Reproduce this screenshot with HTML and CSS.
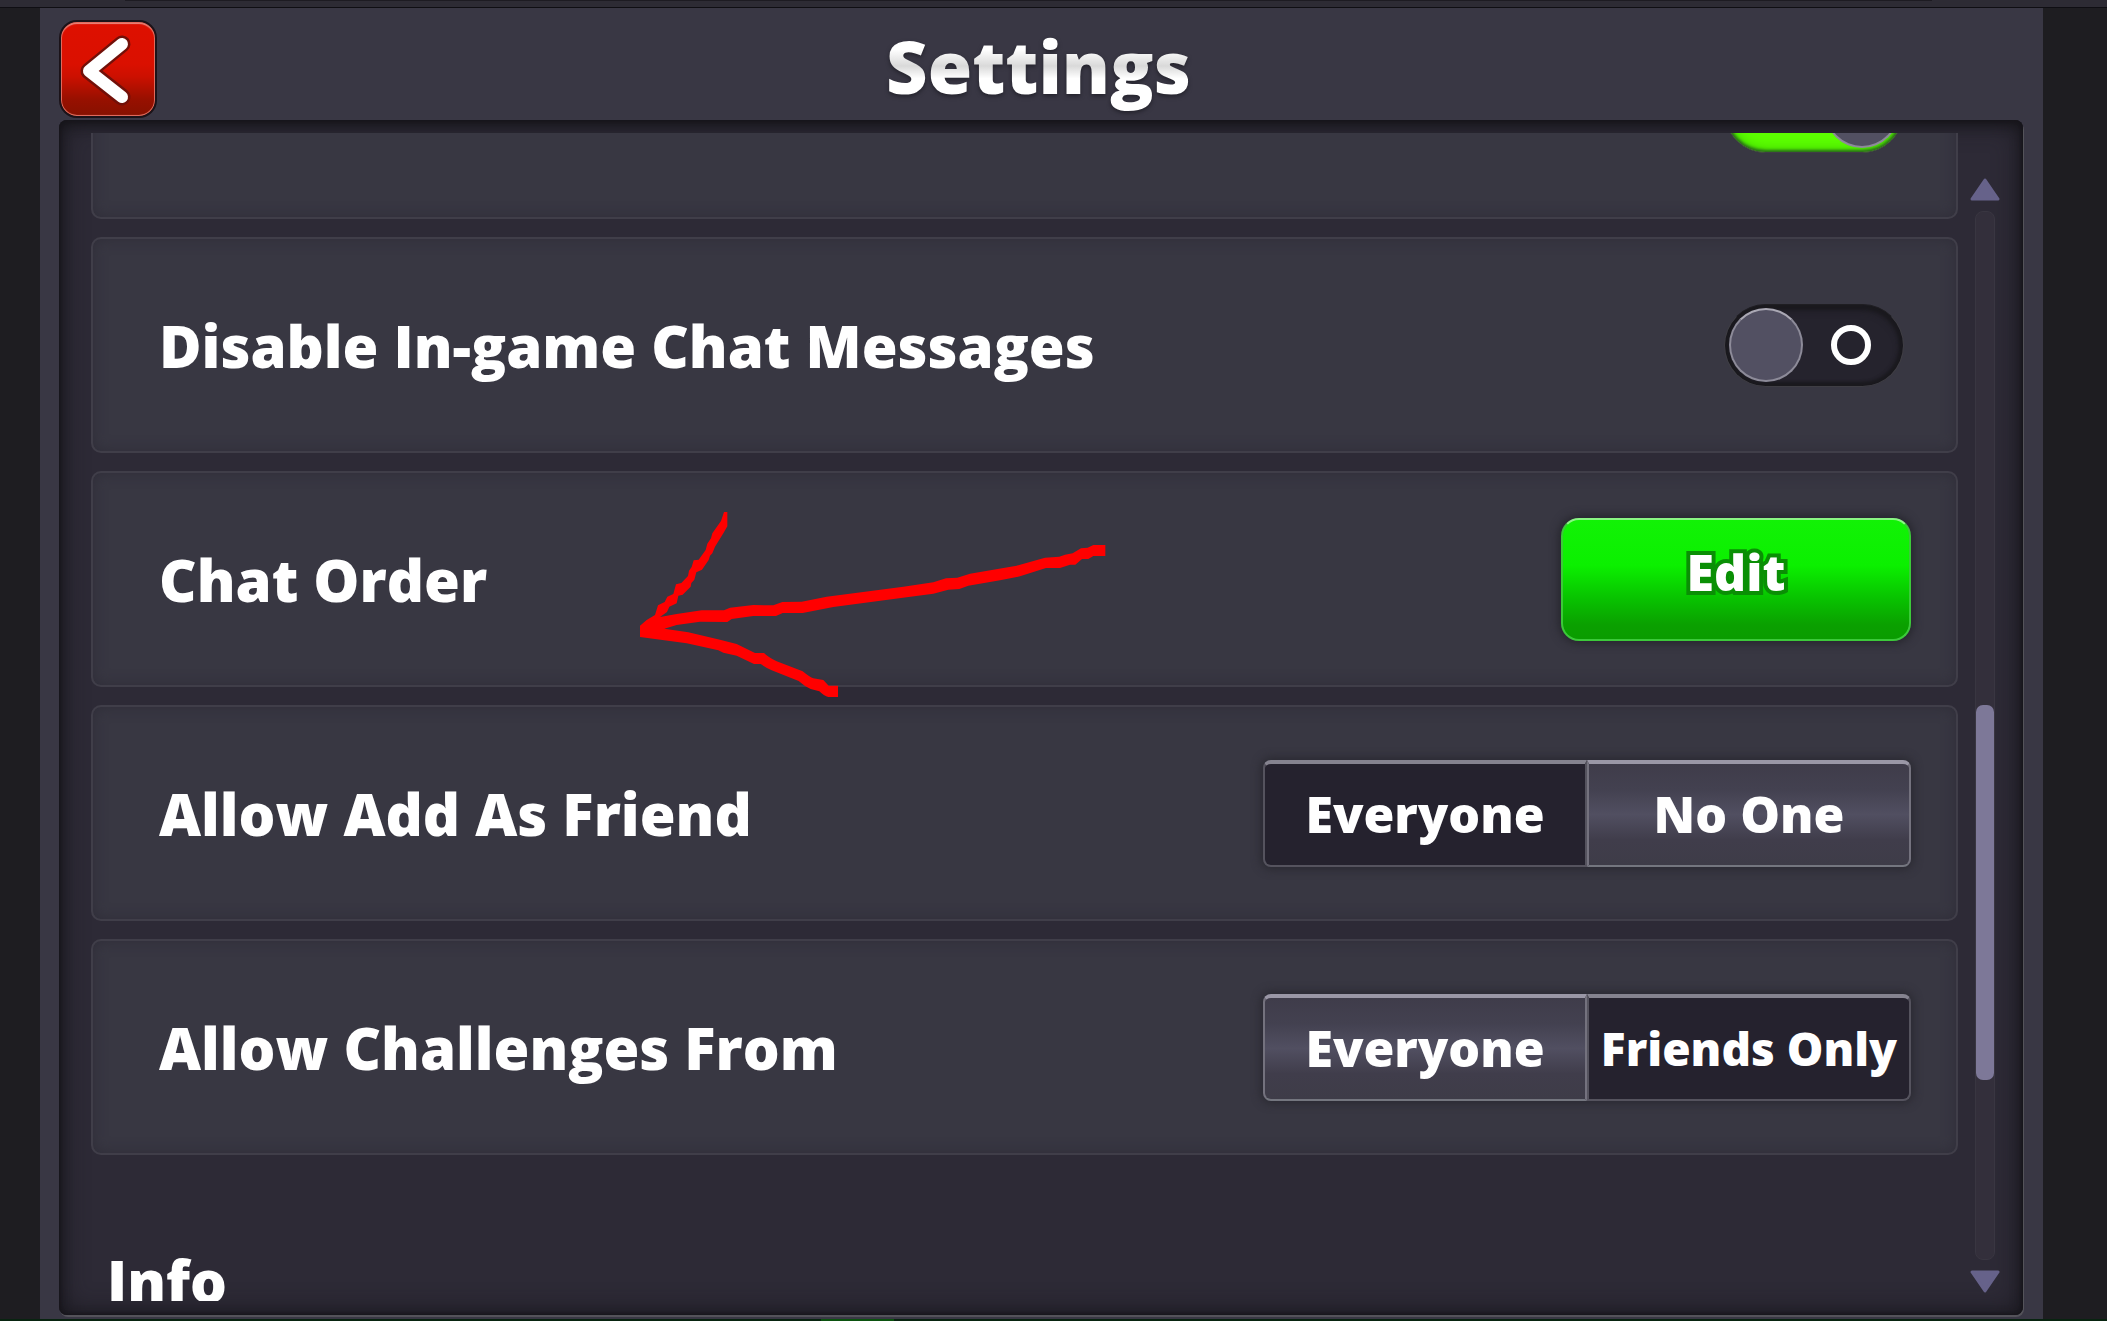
FILE: index.html
```html
<!DOCTYPE html>
<html lang="en">
  <head>
    <meta charset="utf-8">
    <title>Settings</title>
    <link rel="stylesheet" href="styles.css">
  </head>
  <body>
    <div class="topbar"></div>
    <main class="game">
      <header class="header">
        <button class="back" aria-label="Back">
          <svg viewBox="0 0 98 98" width="98" height="98">
            <path class="back-shadow" d="M63 24 L30 51 L63 77"/>
            <path class="back-arrow" d="M63 24 L30 51 L63 77"/>
          </svg>
        </button>
        <h1>Settings</h1>
      </header>

      <div class="panel">
        <div class="viewport">
          <div class="list">
            <div class="row">
              <span></span>
              <input class="toggle" type="checkbox" aria-label="Previous setting" checked>
            </div>

            <div class="row">
              <label for="disable-chat">Disable In-game Chat Messages</label>
              <input class="toggle" type="checkbox" id="disable-chat">
            </div>

            <div class="row">
              <span>Chat Order</span>
              <button class="edit">Edit</button>
              <svg class="pointer" viewBox="0 0 1500 660" width="500" height="220">
                <path d="M1456 165 V198 H1420 L1405 207 H1386 L1366 224 H1350 L1320 234 H1278 L1200 259 L1140 271 L1045 287 L1018 297 L985 299 L940 311 L860 322 L640 351 L548 369 H488 L468 378 H400 L335 387 L322 396 L240 395 L170 405 L133 416 L205 427 L300 449 L350 462 L405 489 H432 Q445 502 470 514 L548 544 Q570 562 580 565 L610 570 L626 587 H654 V621 H625 Q612 618 598 604 L572 597 Q555 590 536 573 L455 541 Q438 533 422 522 H402 L350 497 L310 488 L295 481 L200 460 L60 441 V407 L80 390 L105 375 L114 346 L134 336 L142 320 L160 312 L168 283 L184 279 L204 258 L207 242 L215 231 L221 211 L236 209 L257 180 L262 161 L273 145 L277 130 L303 93 L312 66 H322 V109 L310 130 L285 170 L277 190 L270 197 L266 210 L246 239 L229 247 L223 269 L214 279 L212 290 L188 314 L175 317 L170 340 L148 350 L141 366 L120 381 L170 372 L245 361 H312 L330 353 L400 345 L460 346 L487 336 L545 335 L620 320 L850 290 L940 277 L978 265 L1012 263 L1050 251 L1195 226 L1275 203 L1318 200 L1335 194 L1358 190 L1383 175 L1403 173 L1420 165 Z"/>
              </svg>
            </div>

            <div class="row">
              <span id="add-friend">Allow Add As Friend</span>
              <div class="segments" role="radiogroup" aria-labelledby="add-friend">
                <label class="segment"><input type="radio" name="add-friend">Everyone</label>
                <label class="segment"><input type="radio" name="add-friend" checked>No One</label>
              </div>
            </div>

            <div class="row">
              <span id="challenges">Allow Challenges From</span>
              <div class="segments" role="radiogroup" aria-labelledby="challenges">
                <label class="segment"><input type="radio" name="challenges" checked>Everyone</label>
                <label class="segment small"><input type="radio" name="challenges">Friends Only</label>
              </div>
            </div>

            <h2>Info</h2>
          </div>
        </div>

        <div class="scroll">
          <svg viewBox="0 0 30 23" width="30" height="23">
            <path d="M15 2 L28 21 H2 Z"/>
          </svg>
          <div class="track">
            <div class="thumb"></div>
          </div>
          <svg viewBox="0 0 30 23" width="30" height="23">
            <path d="M15 21 L28 2 H2 Z"/>
          </svg>
        </div>
      </div>
    </main>
    <div class="bottombar"><div class="bottombar-mark"></div></div>
  </body>
</html>
```

FILE: styles.css
```css
*,
*::before,
*::after {
  box-sizing: border-box;
}

body {
  display: flex;
  flex-direction: column;
  height: 100vh;
  margin: 0;
  overflow: hidden;
  background-color: #1e1d21;
  color: #fff;
  font-family: "Open Sans", "Noto Sans", sans-serif;
  font-size: 58px;
  font-weight: 800;
}

.topbar {
  height: 8px;
  padding: 0 175px 0 125px;
  background-color: #2d2b34;
  border-bottom: 1px solid #0f0e13;
}

.topbar::before {
  content: "";
  display: block;
  height: 1px;
  background-color: #1d1b22;
}

.bottombar {
  height: 2px;
  padding-left: 821px;
  background-color: #082410;
}

.bottombar-mark {
  width: 73px;
  height: 2px;
  background-color: #0b520f;
}

.game {
  display: flex;
  flex: 1;
  flex-direction: column;
  min-height: 0;
  margin: 0 64px 0 40px;
  padding: 0 20px 4px 19px;
  background-color: #393744;
}

/* header */

.header {
  display: grid;
  grid-template-columns: 98px 1fr 98px;
  align-items: end;
  height: 112px;
  padding: 0 5px 2px 0;
}

.back {
  width: 98px;
  height: 98px;
  padding: 0;
  border: 2px solid #1b1319;
  border-radius: 18px;
  background: linear-gradient(#de1000 0%, #da1000 45%, #cc1000 58%, #981000 82%, #861100 100%);
  box-shadow: inset 0 0 0 1px #e06a5c, inset 0 2px 1px #ec8a80, inset 0 -1px 1px #b4553c;
  cursor: pointer;
}

.back svg {
  display: block;
  margin: -2px;
}

.back path {
  fill: none;
  stroke: #fff;
  stroke-width: 12;
  stroke-linecap: round;
  stroke-linejoin: round;
}

.back .back-shadow {
  stroke: #721009;
  stroke-width: 17;
}

h1 {
  margin: 0;
  font-size: 72px;
  font-weight: 800;
  line-height: 104px;
  text-align: center;
  background: linear-gradient(#fff 34%, #d9d9d9 50%, #fff 62%);
  -webkit-background-clip: text;
  background-clip: text;
  color: transparent;
  filter: drop-shadow(0 2px 2px #22212a);
}

/* panel */

.panel {
  display: flex;
  flex: 1;
  min-height: 0;
  padding: 13px 0 14px 32px;
  border-radius: 8px;
  background-color: #2d2a36;
  box-shadow: inset 0 0 3px 1px #17151b, inset 0 4px 12px #17161b, inset 0 0 28px #17161b, 1px 2px 0 #54535a;
}

.viewport {
  flex: 1;
  overflow: hidden;
}

/* scroll offset of the list */
.list {
  display: flex;
  flex-direction: column;
  gap: 18px;
  margin-top: -130px;
}

.row {
  display: flex;
  flex-shrink: 0;
  align-items: center;
  justify-content: space-between;
  position: relative;
  height: 216px;
  padding: 0 45px 0 66px;
  border: 2px solid #403e49;
  border-radius: 10px;
  background-color: #383742;
  box-shadow: inset 0 0 14px #2f2d38;
}

h2 {
  margin: 68px 0 0 16px;
  font-size: 58px;
  font-weight: 800;
}

.toggle {
  appearance: none;
  display: flex;
  align-items: center;
  justify-content: space-between;
  width: 180px;
  height: 83px;
  margin: 0 7px 0 0;
  padding: 0 32px 0 4px;
  border: 1px solid #3f3e44;
  border-top-color: #1f1e22;
  border-radius: 42px;
  background-color: #25232d;
  box-shadow: inset 0 0 3px 4px #1a191e, inset 0 4px 8px #1a191e;
}

.toggle::before {
  content: "";
  width: 74px;
  height: 74px;
  border: 2px solid #8d8b99;
  border-top-color: #aaa8b4;
  border-radius: 50%;
  background-color: #525062;
}

.toggle::after {
  content: "";
  width: 40px;
  height: 40px;
  border: 6px solid #fff;
  border-radius: 50%;
}

.toggle:checked {
  padding: 0 4px 0 32px;
  flex-direction: row-reverse;
  background-color: #5cff00;
  box-shadow: inset 0 0 3px 2px #2a6b1a, inset 0 0 14px #2fb400;
}

.toggle:checked::after {
  width: 6px;
  border-width: 0 0 0 6px;
  border-radius: 0;
}

.edit {
  width: 350px;
  height: 123px;
  padding: 0 0 14px;
  border: 2px solid #3cc93a;
  border-top-color: #8af784;
  border-radius: 18px;
  background: linear-gradient(#12f206 0%, #0bf000 38%, #08c400 65%, #0aa000 88%, #0a9c00 100%);
  box-shadow: 0 0 10px 2px #24242b;
  color: #fff;
  font: inherit;
  font-size: 50px;
  -webkit-text-stroke: 8px #0a8f05;
  paint-order: stroke fill;
  cursor: pointer;
}

.pointer {
  position: absolute;
  top: 17px;
  left: 527px;
  z-index: 1;
  fill: #f00;
}

/* two-way choices */

.segments {
  display: flex;
  width: 648px;
  height: 107px;
  border-radius: 8px;
  box-shadow: 0 0 10px 2px #292830;
}

.segment {
  display: flex;
  flex: 1;
  align-items: center;
  justify-content: center;
  border: 2px solid #55535e;
  border-top: 4px solid #85838f;
  background-color: #25222e;
  font-size: 50px;
  cursor: pointer;
}

.segment:first-child {
  border-radius: 8px 0 0 8px;
}

.segment:last-child {
  border-radius: 0 8px 8px 0;
}

.segment.small {
  font-size: 46px;
}

.segment:has(input:checked) {
  border-color: #9a97a6 #74727e #74767f;
  background: linear-gradient(#3f3c4a 0%, #434150 25%, #514f61 50%, #403d4b 75%, #3e3c48 100%);
}

.segment input {
  appearance: none;
  width: 0;
  height: 0;
  margin: 0;
}

/* scrollbar */

.scroll {
  display: flex;
  flex-direction: column;
  align-items: center;
  width: 30px;
  margin: 45px 23px 8px 12px;
}

.scroll path {
  fill: #66628a;
  stroke: #66628a;
  stroke-width: 3;
  stroke-linejoin: round;
}

.track {
  flex: 1;
  width: 20px;
  margin: 10px 0;
  padding: 493px 0 0;
  border: 1px solid #393641;
  border-radius: 8px;
  background-color: #332f3b;
}

.thumb {
  height: 375px;
  border-radius: 7px;
  background-color: #7d7898;
}
```
